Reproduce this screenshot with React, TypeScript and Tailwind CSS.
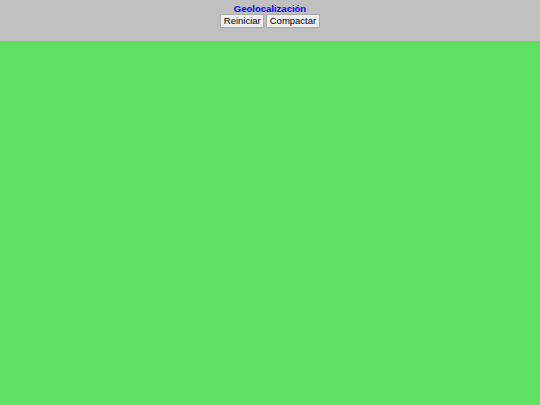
import React from 'react';

export default function App() {
  return (
    <div className="flex h-[405px] w-full flex-col font-['Liberation_Sans',Arial,sans-serif]">
      <div className="flex h-[41px] flex-col items-center bg-[#c0c0c0] pt-[3px]">
        <div className="text-[9.5px] leading-[11px] font-bold text-[#0000ff]">Geolocalización</div>
        <div className="flex gap-[2px]">
          <button className="h-[14px] border border-[#a9a9a9] bg-[#efefef] px-[2.5px] text-[9.5px] leading-[12px] text-black">
            Reiniciar
          </button>
          <button className="h-[14px] border border-[#a9a9a9] bg-[#efefef] px-[2.5px] text-[9.5px] leading-[12px] text-black">
            Compactar
          </button>
        </div>
      </div>
      <div className="flex-1 bg-[#5ee062]" />
    </div>
  );
}
